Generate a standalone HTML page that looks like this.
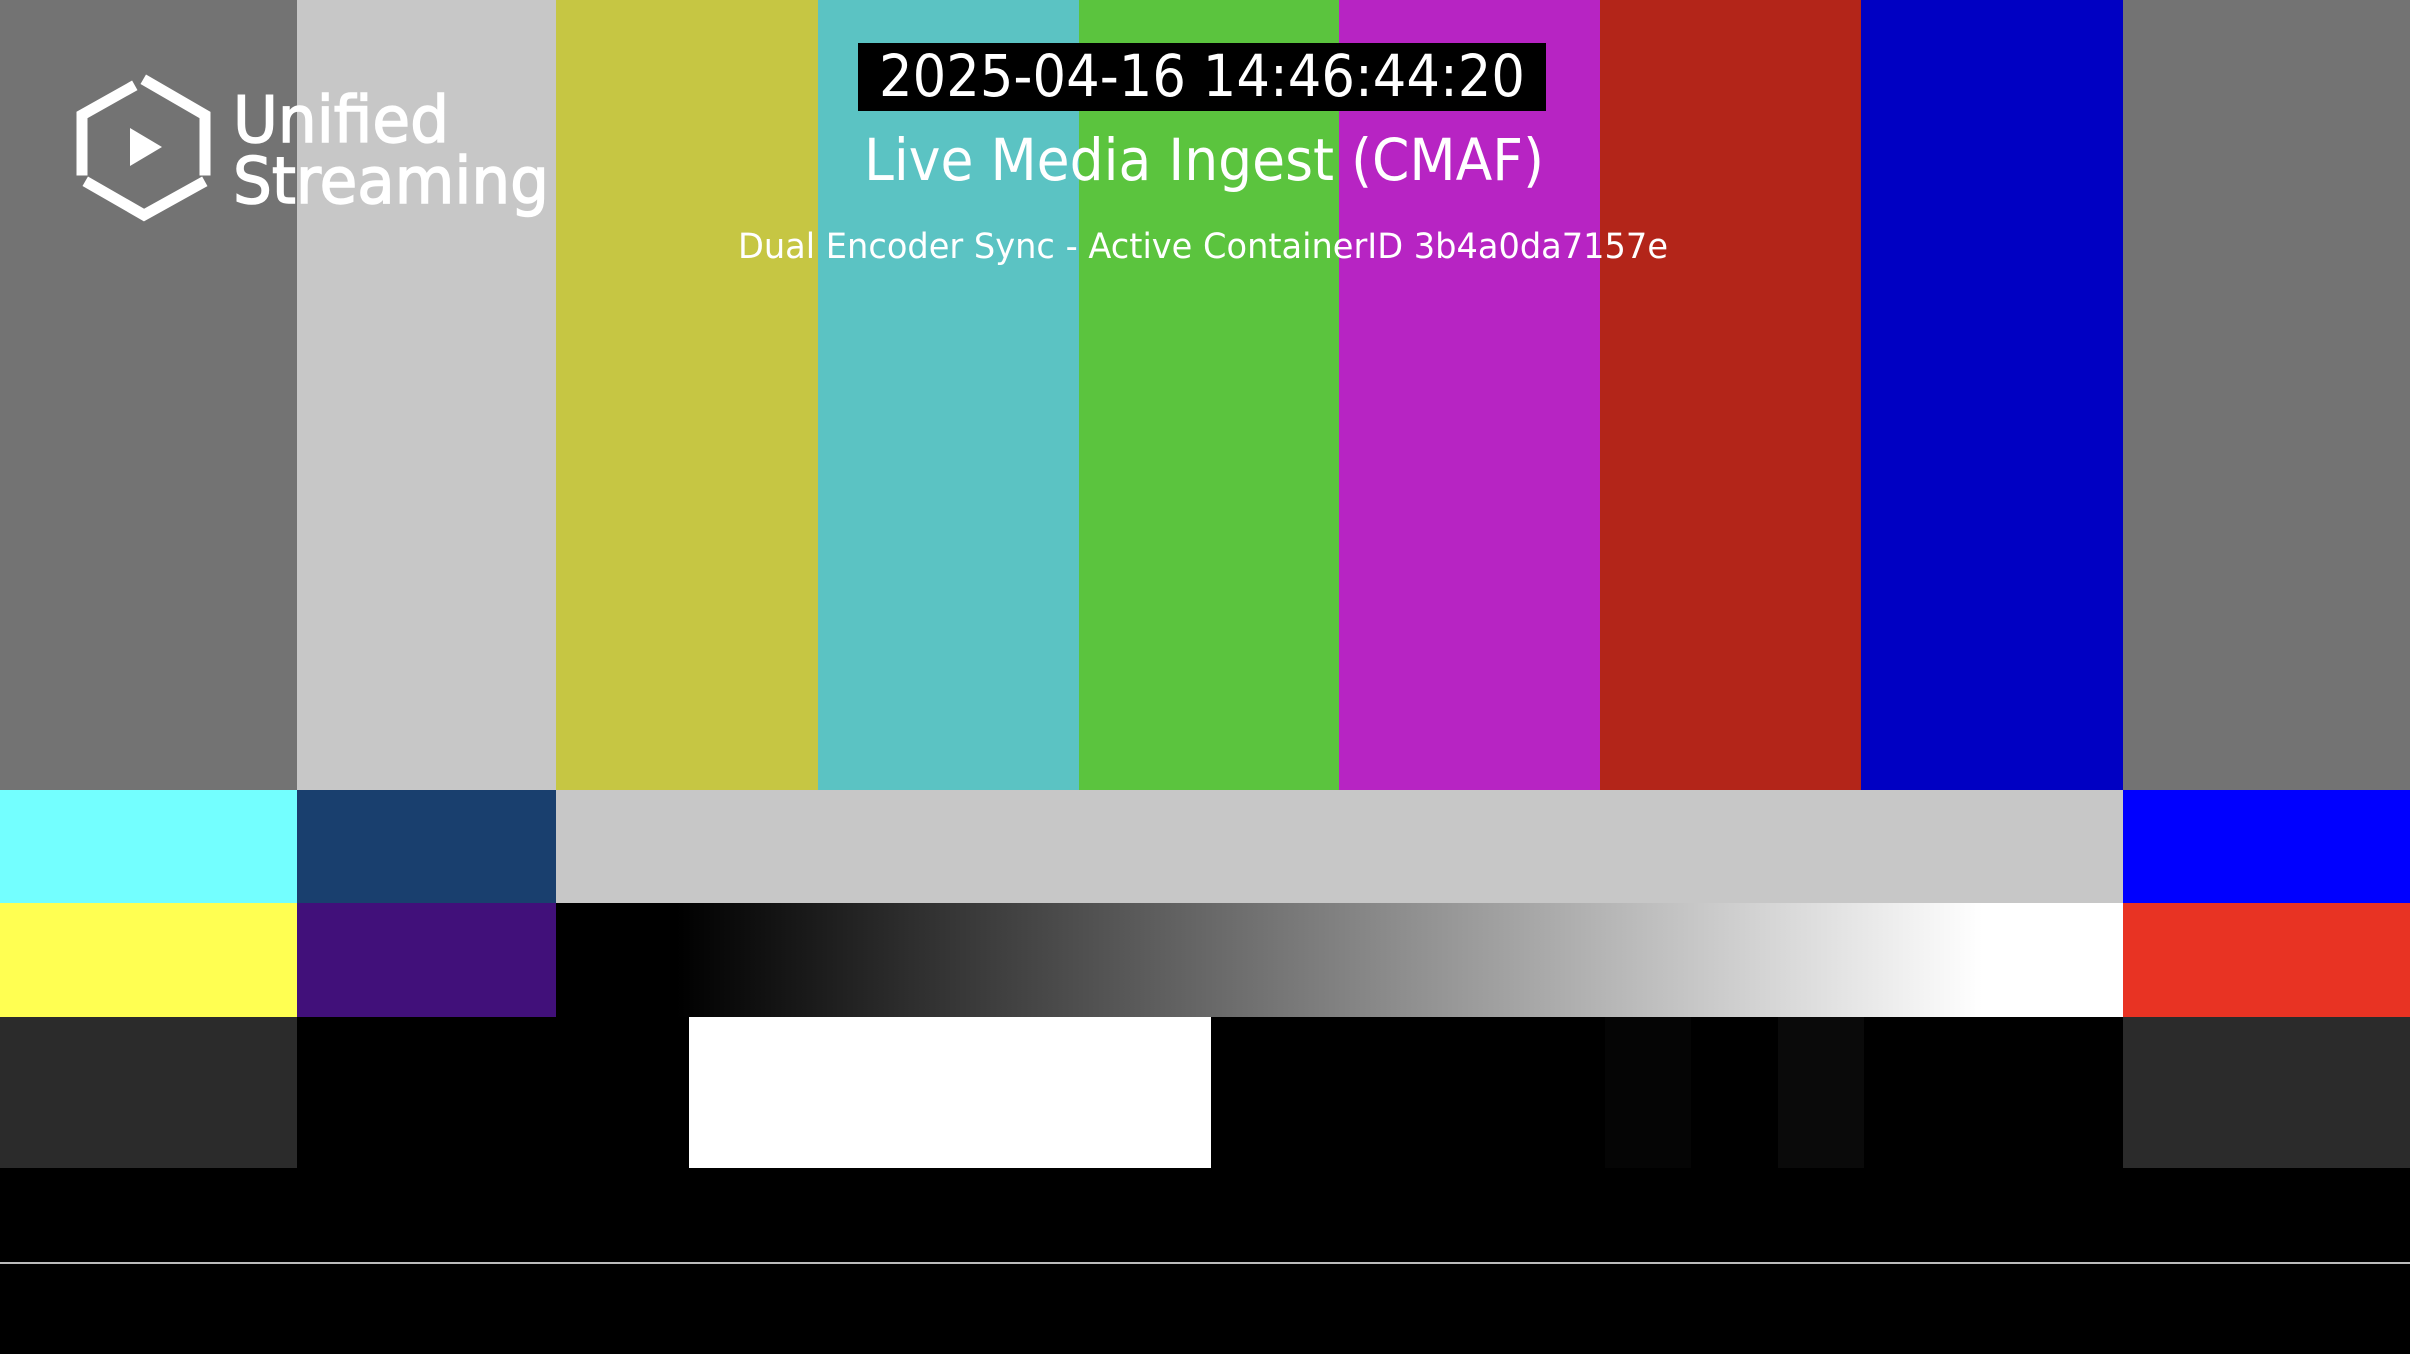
<!DOCTYPE html>
<html><head><meta charset="utf-8"><style>
html,body{margin:0;padding:0;background:#000;}
body{width:2410px;height:1354px;position:relative;overflow:hidden;}
div.b{position:absolute;}
svg{position:absolute;left:0;top:0;}
</style></head><body>
<div class="b" style="left:0;top:0;width:297px;height:790px;background:#737373"></div>
<div class="b" style="left:297px;top:0;width:259px;height:790px;background:#c7c7c7"></div>
<div class="b" style="left:556px;top:0;width:262px;height:790px;background:#c6c643"></div>
<div class="b" style="left:818px;top:0;width:261px;height:790px;background:#5bc3c3"></div>
<div class="b" style="left:1079px;top:0;width:260px;height:790px;background:#5bc43e"></div>
<div class="b" style="left:1339px;top:0;width:261px;height:790px;background:#b724c3"></div>
<div class="b" style="left:1600px;top:0;width:261px;height:790px;background:#b32519"></div>
<div class="b" style="left:1861px;top:0;width:262px;height:790px;background:#0000c3"></div>
<div class="b" style="left:2123px;top:0;width:287px;height:790px;background:#737373"></div>
<div class="b" style="left:0;top:790px;width:297px;height:113px;background:#73ffff"></div>
<div class="b" style="left:297px;top:790px;width:259px;height:113px;background:#193f6e"></div>
<div class="b" style="left:556px;top:790px;width:1567px;height:113px;background:#c7c7c7"></div>
<div class="b" style="left:2123px;top:790px;width:287px;height:113px;background:#0000ff"></div>
<div class="b" style="left:0;top:903px;width:297px;height:114px;background:#ffff52"></div>
<div class="b" style="left:297px;top:903px;width:259px;height:114px;background:#41107a"></div>
<div class="b" style="left:556px;top:903px;width:1567px;height:114px;background:linear-gradient(to right,#000 0,#000 120px,#fff 1427px,#fff 1567px)"></div>
<div class="b" style="left:2123px;top:903px;width:287px;height:114px;background:#e83323"></div>
<div class="b" style="left:0;top:1017px;width:297px;height:151px;background:#2b2b2b"></div>
<div class="b" style="left:689px;top:1017px;width:522px;height:151px;background:#fff"></div>
<div class="b" style="left:1605px;top:1017px;width:86px;height:151px;background:#050505"></div>
<div class="b" style="left:1778px;top:1017px;width:86px;height:151px;background:#0a0a0a"></div>
<div class="b" style="left:2123px;top:1017px;width:287px;height:151px;background:#2b2b2b"></div>
<div class="b" style="left:0;top:1262px;width:2410px;height:2px;background:#bbb"></div>
<div class="b" style="left:858px;top:43px;width:688px;height:68px;background:#000"></div>
<svg width="2410" height="400" viewBox="0 0 2410 400">
  <g fill="#fff" font-family="DejaVu Sans, sans-serif">
    <text x="879" y="96" font-size="58" textLength="646" lengthAdjust="spacingAndGlyphs">2025-04-16 14:46:44:20</text>
    <text x="864" y="180" font-size="58" textLength="680" lengthAdjust="spacingAndGlyphs">Live Media Ingest (CMAF)</text>
    <text x="738" y="258" font-size="35" textLength="930" lengthAdjust="spacingAndGlyphs">Dual Encoder Sync - Active ContainerID 3b4a0da7157e</text>
  </g>
  <g fill="#fff" font-family="DejaVu Sans, sans-serif" stroke="#fff" stroke-width="1.5">
    <text x="233" y="142" font-size="64" textLength="216" lengthAdjust="spacingAndGlyphs">Unified</text>
    <text x="233" y="203" font-size="64" textLength="316" lengthAdjust="spacingAndGlyphs">Streaming</text>
  </g>
  <g stroke="#fff" stroke-width="11" fill="none" stroke-linecap="square">
    <path d="M148 82 L205 115 L205 170"/>
    <path d="M200 184 L144 215 L90 184"/>
    <path d="M82 170 L82 115 L130 88"/>
  </g>
  <path d="M130 128 L162 147 L130 166 Z" fill="#fff"/>
</svg>
</body></html>
